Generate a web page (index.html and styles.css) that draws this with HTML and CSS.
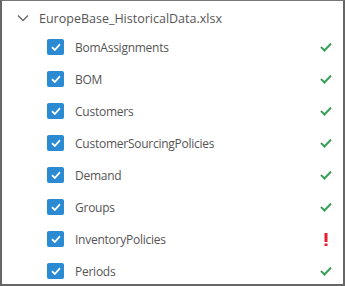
FILE: index.html
```html
<!DOCTYPE html>
<html lang="en">
<head>
    <meta charset="UTF-8">
    <title>Tables</title>
    <link rel="stylesheet" href="styles.css">
</head>
<body>
    <div class="panel">
        <div class="file-row">
            <svg class="chevron" width="12" height="8" viewBox="0 0 12 8"><path d="M1 1.5 L6 6.5 L11 1.5" fill="none" stroke="#666" stroke-width="1.3"/></svg>
            <span class="file-name">EuropeBase_HistoricalData.xlsx</span>
        </div>
        <ul class="tables">
            <li class="table-row">
                <span class="box"><svg width="10" height="8" viewBox="0 0 10 8"><path d="M1 4.2 L3.8 7 L9 1.2" fill="none" stroke="#fff" stroke-width="1.8"/></svg></span>
                <span class="name">BomAssignments</span>
                <svg class="ok" width="12" height="10" viewBox="0 0 12 10"><path d="M1 5 L4.5 8.5 L11 1.5" fill="none" stroke="#3c9f5c" stroke-width="2"/></svg>
            </li>
            <li class="table-row">
                <span class="box"><svg width="10" height="8" viewBox="0 0 10 8"><path d="M1 4.2 L3.8 7 L9 1.2" fill="none" stroke="#fff" stroke-width="1.8"/></svg></span>
                <span class="name">BOM</span>
                <svg class="ok" width="12" height="10" viewBox="0 0 12 10"><path d="M1 5 L4.5 8.5 L11 1.5" fill="none" stroke="#3c9f5c" stroke-width="2"/></svg>
            </li>
            <li class="table-row">
                <span class="box"><svg width="10" height="8" viewBox="0 0 10 8"><path d="M1 4.2 L3.8 7 L9 1.2" fill="none" stroke="#fff" stroke-width="1.8"/></svg></span>
                <span class="name">Customers</span>
                <svg class="ok" width="12" height="10" viewBox="0 0 12 10"><path d="M1 5 L4.5 8.5 L11 1.5" fill="none" stroke="#3c9f5c" stroke-width="2"/></svg>
            </li>
            <li class="table-row">
                <span class="box"><svg width="10" height="8" viewBox="0 0 10 8"><path d="M1 4.2 L3.8 7 L9 1.2" fill="none" stroke="#fff" stroke-width="1.8"/></svg></span>
                <span class="name">CustomerSourcingPolicies</span>
                <svg class="ok" width="12" height="10" viewBox="0 0 12 10"><path d="M1 5 L4.5 8.5 L11 1.5" fill="none" stroke="#3c9f5c" stroke-width="2"/></svg>
            </li>
            <li class="table-row">
                <span class="box"><svg width="10" height="8" viewBox="0 0 10 8"><path d="M1 4.2 L3.8 7 L9 1.2" fill="none" stroke="#fff" stroke-width="1.8"/></svg></span>
                <span class="name">Demand</span>
                <svg class="ok" width="12" height="10" viewBox="0 0 12 10"><path d="M1 5 L4.5 8.5 L11 1.5" fill="none" stroke="#3c9f5c" stroke-width="2"/></svg>
            </li>
            <li class="table-row">
                <span class="box"><svg width="10" height="8" viewBox="0 0 10 8"><path d="M1 4.2 L3.8 7 L9 1.2" fill="none" stroke="#fff" stroke-width="1.8"/></svg></span>
                <span class="name">Groups</span>
                <svg class="ok" width="12" height="10" viewBox="0 0 12 10"><path d="M1 5 L4.5 8.5 L11 1.5" fill="none" stroke="#3c9f5c" stroke-width="2"/></svg>
            </li>
            <li class="table-row">
                <span class="box"><svg width="10" height="8" viewBox="0 0 10 8"><path d="M1 4.2 L3.8 7 L9 1.2" fill="none" stroke="#fff" stroke-width="1.8"/></svg></span>
                <span class="name">InventoryPolicies</span>
                <svg class="warn" width="4" height="13" viewBox="0 0 4 13"><rect x="0.5" y="0" width="3" height="9" fill="#e3202f"/><rect x="0.5" y="10.5" width="3" height="2.5" fill="#e3202f"/></svg>
            </li>
            <li class="table-row">
                <span class="box"><svg width="10" height="8" viewBox="0 0 10 8"><path d="M1 4.2 L3.8 7 L9 1.2" fill="none" stroke="#fff" stroke-width="1.8"/></svg></span>
                <span class="name">Periods</span>
                <svg class="ok" width="12" height="10" viewBox="0 0 12 10"><path d="M1 5 L4.5 8.5 L11 1.5" fill="none" stroke="#3c9f5c" stroke-width="2"/></svg>
            </li>
        </ul>
    </div>
</body>
</html>
```

FILE: styles.css
```css
body {
    margin: 0;
    background: #fff;
    font-family: 'Open Sans', 'Noto Sans', sans-serif;
    color: #555;
}
.panel {
    box-sizing: border-box;
    width: 345px;
    height: 286px;
    border: 2px solid #666;
    border-top: 1px solid #777;
    overflow: hidden;
    background: #fff;
}
.file-row {
    display: flex;
    align-items: center;
    height: 30px;
    padding-left: 15px;
    padding-top: 4px;
    box-sizing: border-box;
}
.chevron {
    margin-right: 10px;
}
.file-name {
    font-size: 12.5px;
    color: #555;
}
.tables {
    list-style: none;
    margin: 0;
    padding: 0;
}
.table-row {
    display: flex;
    align-items: center;
    height: 32px;
    padding-left: 45px;
    padding-right: 11px;
}
.box {
    width: 17px;
    height: 16px;
    border-radius: 2px;
    background: #2a8ad4;
    display: flex;
    align-items: center;
    justify-content: center;
    margin-right: 11px;
}
.name {
    flex: 1;
    font-size: 12px;
    letter-spacing: -0.25px;
    color: #555;
}
.warn {
    margin-right: 4px;
}
```
